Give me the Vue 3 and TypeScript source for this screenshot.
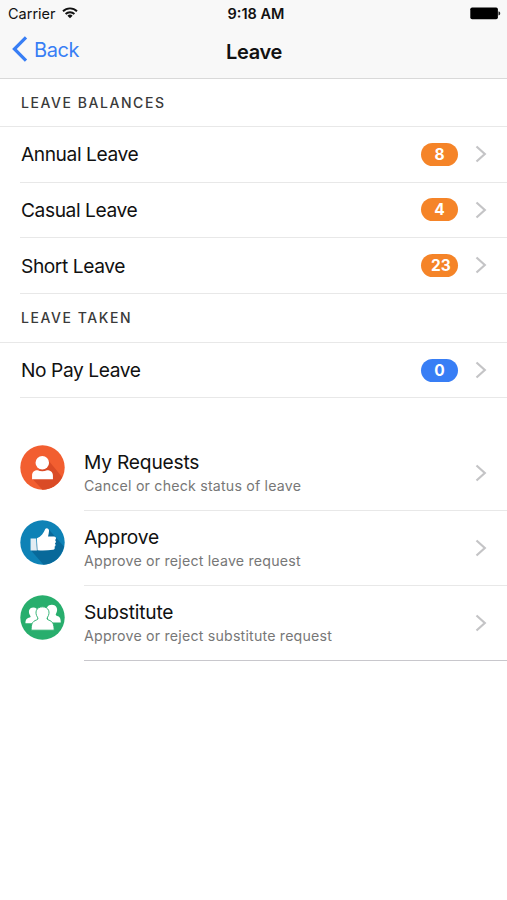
<script setup lang="ts">
interface Balance {
  label: string
  count: number
  tone: 'orange' | 'blue'
}

interface Section {
  title: string
  items: Balance[]
}

interface Action {
  title: string
  note: string
  icon: 'person' | 'thumb' | 'group'
}

const sections: Section[] = [
  {
    title: 'LEAVE BALANCES',
    items: [
      { label: 'Annual Leave', count: 8, tone: 'orange' },
      { label: 'Casual Leave', count: 4, tone: 'orange' },
      { label: 'Short Leave', count: 23, tone: 'orange' },
    ],
  },
  {
    title: 'LEAVE TAKEN',
    items: [{ label: 'No Pay Leave', count: 0, tone: 'blue' }],
  },
]

const actions: Action[] = [
  { title: 'My Requests', note: 'Cancel or check status of leave', icon: 'person' },
  { title: 'Approve', note: 'Approve or reject leave request', icon: 'thumb' },
  { title: 'Substitute', note: 'Approve or reject substitute request', icon: 'group' },
]
</script>

<template>
  <div class="screen">
    <header class="top">
      <div class="status">
        <div class="carrier">
          <span>Carrier</span>
          <svg class="wifi" width="16" height="12" viewBox="0 0 16 12">
            <path d="M1 4.2a10 10 0 0 1 14 0M3.6 7a6.3 6.3 0 0 1 8.8 0" fill="none" stroke="#111" stroke-width="1.9" />
            <path d="M8 11.3 5.4 8.8a3.7 3.7 0 0 1 5.2 0z" fill="#111" />
          </svg>
        </div>
        <span class="time">9:18 AM</span>
        <svg class="battery" width="31" height="13" viewBox="0 0 31 13">
          <rect x=".3" y=".5" width="27.6" height="11.8" rx="1.8" fill="#000" />
          <path d="M28.8 4.6c1.4.4 1.4 3.2 0 3.6z" fill="#000" stroke="#000" stroke-width=".5" />
        </svg>
      </div>
      <nav class="nav">
        <button class="back">
          <svg width="16" height="26" viewBox="0 0 16 26">
            <path d="M14 1.4 2.4 13 14 24.6" fill="none" stroke="#387ef5" stroke-width="3.2" />
          </svg>
          <span>Back</span>
        </button>
        <h1>Leave</h1>
        <span></span>
      </nav>
    </header>

    <main>
      <section v-for="section in sections" :key="section.title">
        <h2>{{ section.title }}</h2>
        <div v-for="item in section.items" :key="item.label" class="row">
          <span class="label">{{ item.label }}</span>
          <span class="badge" :class="[item.tone, { wide: item.count > 9 }]">{{ item.count }}</span>
          <svg class="chevron" width="12" height="18" viewBox="0 0 12 18">
            <path d="M1.5 1.5 9.8 9l-8.3 7.5" fill="none" stroke="#c4c4c6" stroke-width="2.2" />
          </svg>
        </div>
      </section>

      <ul class="actions">
        <li v-for="action in actions" :key="action.title">
          <svg class="icon" width="45" height="45" viewBox="0 0 44 44">
            <template v-if="action.icon === 'person'">
              <circle cx="22" cy="22" r="21.7" fill="#f25e30" />
              <path d="M26.5 13.5 41.3 31.5A21.7 21.7 0 0 1 22 43.7L12.5 33.5z" fill="#da4b26" />
              <circle cx="21.8" cy="17.3" r="6.6" fill="#fff" />
              <path d="M11.8 33.5v-3.800c0-3.300 2.300-5 5.400-5 2.800 1.200 6.400 1.200 9.200 0 3.100 0 5.800 1.700 5.800 5v3.800z" fill="#fff" />
            </template>
            <template v-else-if="action.icon === 'thumb'">
              <circle cx="22" cy="22" r="21.7" fill="#0e82b6" />
              <path d="M28 9 42.9 26A21.7 21.7 0 0 1 23 43.7L11 30z" fill="#08699a" />
              <path d="M10.300 18.200h5.500l.7 11.500-6.200.1z" fill="#e3edf3" />
              <path d="M16.500 17.900c4.200-1.600 6.800-5.300 8.200-9.100.8-1.500 3.800-.9 3.700 1.800-.1 2-.6 3.900-1 5.600l6-.1c2.200.1 2.400 3 .7 3.500 1.400.6 1.300 2.900 0 3.400 1.100.7.8 2.800-.4 3.200.8 1.300.1 2.900-1.400 3-4.700.5-9.900.9-15.200.4z" fill="#fff" />
            </template>
            <template v-else>
              <circle cx="22" cy="22" r="21.7" fill="#28ae6d" />
              <path d="M5.300 27.600c.1-3.500 1.100-4.800 4.200-5.600 1-.3 1.100-1 .5-1.800-2.300-3.300-1.500-7.900 3-7.900 2.700 0 4.500 1.700 4.700 4l-1 11.300zM26.500 17c-1.500-4 .5-7.500 4.600-7.500 4.900 0 6.500 4.700 4.200 8.700-.7 1.200-.3 1.900.7 2.200 3 .9 3.800 2.400 3.900 6.400H28z" fill="#fff" />
              <path d="M10.900 34.400c.1-5.700.8-8.500 5.300-10 1.400-.5 1.700-1.300.9-2.600-3-4.600-1.400-10.200 4.900-10.200s7.900 5.600 4.900 10.200c-.8 1.300-.5 2.100.9 2.600 4.500 1.500 5.500 4.300 5.600 10z" fill="#fff" stroke="#28ae6d" stroke-width=".9" />
            </template>
          </svg>
          <div class="body">
            <div class="text">
              <h3>{{ action.title }}</h3>
              <p>{{ action.note }}</p>
            </div>
            <svg class="chevron" width="12" height="18" viewBox="0 0 12 18">
              <path d="M1.5 1.5 9.8 9l-8.3 7.5" fill="none" stroke="#c4c4c6" stroke-width="2.2" />
            </svg>
          </div>
        </li>
      </ul>
    </main>
  </div>
</template>

<style>
body {
  margin: 0;
  background: #fff;
}
</style>

<style scoped>
.screen {
  box-sizing: border-box;
  width: 100%;
  min-height: 900px;
  background: #fff;
  color: #111;
  font-family: Inter, 'Liberation Sans', sans-serif;
}

h1,
h2,
h3,
p,
ul {
  margin: 0;
  padding: 0;
}

svg {
  display: block;
  flex: none;
}

.top {
  box-sizing: border-box;
  height: 79px;
  background: #f8f8f8;
  border-bottom: 1px solid #d9d9d9;
}

.status {
  display: grid;
  grid-template-columns: 1fr auto 1fr;
  align-items: center;
  height: 27px;
  padding: 0 6px 0 8px;
  font-size: 14.5px;
}

.carrier {
  display: flex;
  align-items: center;
  gap: 6px;
}

.wifi {
  margin-bottom: 2px;
}

.time {
  padding-left: 3px;
  font-weight: 600;
}

.battery {
  justify-self: end;
}

.nav {
  display: grid;
  grid-template-columns: 1fr auto 1fr;
  align-items: center;
  height: 50px;
}

.back {
  display: flex;
  align-items: center;
  gap: 6px;
  padding: 0 0 6px 12px;
  border: 0;
  background: none;
  color: #387ef5;
  font: 400 20px/26px Inter, 'Liberation Sans', sans-serif;
  letter-spacing: -0.4px;
}

.back span {
  padding-top: 1px;
}

h1 {
  padding-left: 1px;
  font-size: 20px;
  font-weight: 600;
  line-height: 26px;
  letter-spacing: -0.3px;
}

h2 {
  box-sizing: border-box;
  height: 48px;
  padding-left: 21px;
  border-bottom: 1px solid #e8e8e8;
  color: #3a3a3a;
  font-size: 14px;
  font-weight: 500;
  line-height: 47px;
  letter-spacing: 1.56px;
}

section + section h2 {
  height: 49px;
}

.row {
  display: flex;
  align-items: center;
  box-sizing: border-box;
  height: 55.6px;
  margin-left: 20px;
  padding: 0 20px 0 1px;
  border-bottom: 1px solid #e8e8e8;
}

.label {
  flex: 1;
  padding-top: 0.4px;
  font-size: 19.2px;
  line-height: 24px;
  letter-spacing: -0.43px;
}

.badge {
  box-sizing: border-box;
  width: 37px;
  height: 23px;
  margin-right: 17px;
  border-radius: 12px;
  color: #fff;
  font-size: 15.5px;
  font-weight: 700;
  line-height: 23px;
  text-align: center;
}

.wide {
  padding-left: 3px;
}

.orange {
  background: #f58428;
}

.blue {
  background: #387ef5;
}

.actions {
  padding-top: 38px;
  list-style: none;
}

li {
  display: flex;
  height: 75px;
  padding-left: 20px;
}

.icon {
  margin: 9px 19px 0 0;
}

.body {
  display: flex;
  flex: 1;
  align-items: center;
  box-sizing: border-box;
  padding-right: 20px;
  border-bottom: 1px solid #e8e8e8;
}

li:last-child .body {
  border-bottom-color: #c8c7cc;
}

.text {
  flex: 1;
  padding-bottom: 1px;
}

h3 {
  font-size: 19.2px;
  font-weight: 400;
  line-height: 26px;
  letter-spacing: -0.2px;
}

p {
  color: #777;
  font-size: 14.2px;
  line-height: 21px;
  letter-spacing: 0.2px;
}
</style>
